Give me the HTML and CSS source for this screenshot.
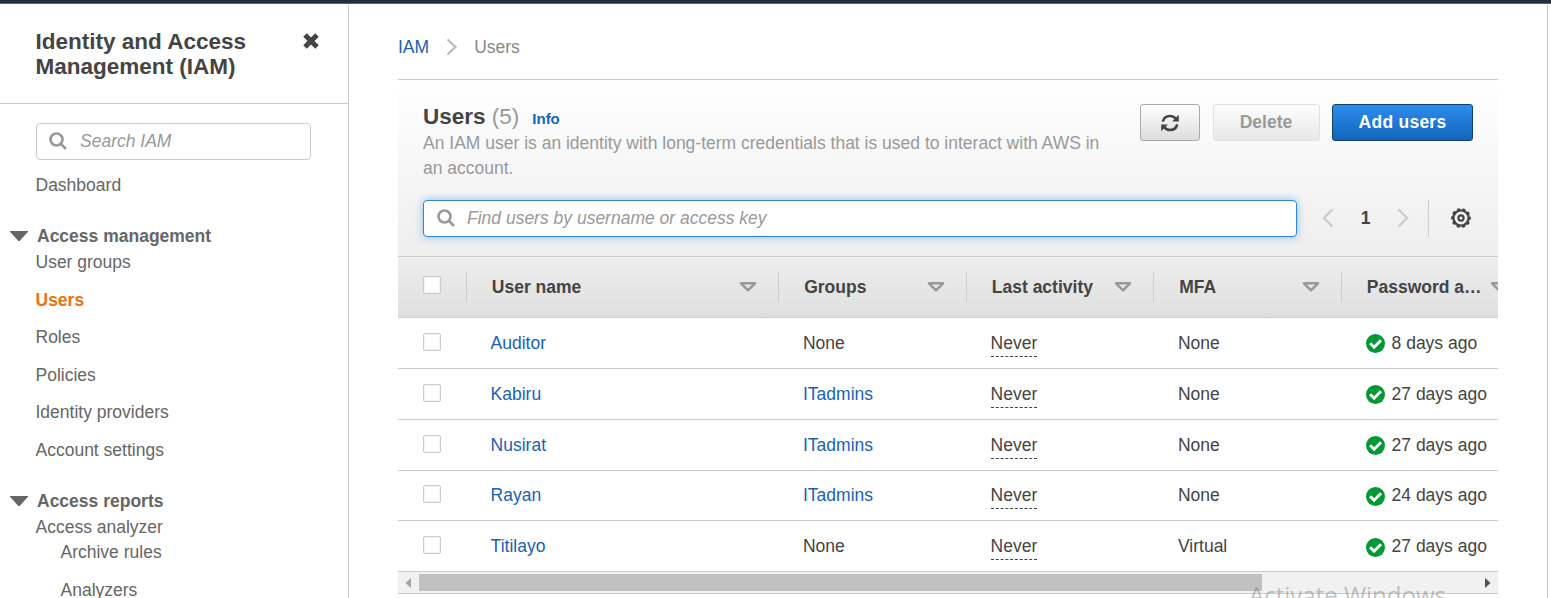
FILE: index.html
```html
<!DOCTYPE html>
<html lang="en">
<head>
<meta charset="utf-8">
<title>IAM - Users</title>
<link rel="stylesheet" href="styles.css">
</head>
<body>
<svg class="defs" width="0" height="0">
  <symbol id="search" viewBox="0 0 18 18"><circle cx="7.5" cy="7.5" r="6" fill="none" stroke="currentColor" stroke-width="2.6"/><path d="M11.7 11.7 17 17" stroke="currentColor" stroke-width="2.6"/></symbol>
  <symbol id="sort" viewBox="0 0 18 10"><path d="M2 1.3h14L9 8.4z" fill="none" stroke="currentColor" stroke-width="2.5" stroke-linejoin="round"/></symbol>
  <symbol id="caret" viewBox="0 0 18 10"><path d="M0 0h18v.8L9.6 10H8.4L0 .8z" fill="currentColor"/></symbol>
  <symbol id="ok" viewBox="0 0 19 19"><circle cx="9.5" cy="9.5" r="9.5" fill="#009933"/><path d="m4.1 9.2 4 4 6.9-6.9" fill="none" stroke="#fff" stroke-width="3"/></symbol>
</svg>
<div class="topbar"></div>
<div class="app">
  <aside class="sidebar">
    <div class="side-head">
      <h2>Identity and Access Management (IAM)</h2>
      <svg class="close" viewBox="0 0 16 16"><path d="m2 2 12 12M14 2 2 14" stroke="#444" stroke-width="5"/></svg>
    </div>
    <div class="side-search"><svg class="glass"><use href="#search"/></svg><span>Search IAM</span></div>
    <nav class="nav">
      <a>Dashboard</a>
      <h3><svg class="caret"><use href="#caret"/></svg>Access management</h3>
      <a>User groups</a>
      <a class="active">Users</a>
      <a>Roles</a>
      <a>Policies</a>
      <a>Identity providers</a>
      <a>Account settings</a>
      <h3><svg class="caret"><use href="#caret"/></svg>Access reports</h3>
      <a class="parent">Access analyzer</a>
      <a class="sub">Archive rules</a>
      <a class="sub">Analyzers</a>
    </nav>
  </aside>
  <main class="main">
    <div class="crumbs"><a>IAM</a><svg class="crumb-sep" viewBox="0 0 12 18"><path d="m1.5 1.5 8 7.5-8 7.5" fill="none" stroke="#bbb" stroke-width="2.2"/></svg><span>Users</span></div>
    <section class="panel">
      <header class="panel-head">
        <div class="title-row">
          <div class="intro">
            <h1>Users <span class="count">(5)</span><a class="info">Info</a></h1>
            <p>An IAM user is an identity with long-term credentials that is used to interact with AWS in an account.</p>
          </div>
          <div class="actions">
            <button class="btn refresh"><svg viewBox="0 0 18 18"><path d="M1.8 7.6C2.6 4 5.6 2 9 2c2.3 0 4.2.9 5.6 2.6M16.2 10.4C15.4 14 12.4 16 9 16c-2.3 0-4.2-.9-5.6-2.6" fill="none" stroke="#444" stroke-width="2.6"/><path d="M17.8.8v6.7h-6.7zM.2 17.2v-6.7h6.7z" fill="#444"/></svg></button>
            <button class="btn delete">Delete</button>
            <button class="btn primary">Add users</button>
          </div>
        </div>
        <div class="filter-row">
          <div class="filter"><svg class="glass"><use href="#search"/></svg><span>Find users by username or access key</span></div>
          <div class="pager">
            <svg viewBox="0 0 12 20"><path d="m10.5 1.5-8.5 8.5 8.5 8.5" fill="none" stroke="#ccc" stroke-width="2.4"/></svg>
            <b>1</b>
            <svg viewBox="0 0 12 20"><path d="m1.5 1.5 8.5 8.5-8.5 8.5" fill="none" stroke="#ccc" stroke-width="2.4"/></svg>
          </div>
          <div class="settings"><svg viewBox="0 0 20 20"><circle cx="10" cy="10" r="7.6" fill="none" stroke="#444" stroke-width="2.3"/><circle cx="10" cy="10" r="8.8" fill="none" stroke="#444" stroke-width="2.2" stroke-dasharray="3 2.529" stroke-dashoffset="1.5"/><circle cx="10" cy="10" r="2.6" fill="none" stroke="#444" stroke-width="2.1"/></svg></div>
        </div>
      </header>
      <div class="row thead">
        <div class="pick"><i class="box"></i></div>
        <div class="th">User name<svg class="sort"><use href="#sort"/></svg></div>
        <div class="th">Groups<svg class="sort"><use href="#sort"/></svg></div>
        <div class="th">Last activity<svg class="sort"><use href="#sort"/></svg></div>
        <div class="th">MFA<svg class="sort"><use href="#sort"/></svg></div>
        <div class="th last">Password a…<svg class="sort"><use href="#sort"/></svg></div>
      </div>
      <div class="row"><div class="pick"><i class="box"></i></div><div><a>Auditor</a></div><div>None</div><div><span class="never">Never</span></div><div>None</div><div><svg class="ok"><use href="#ok"/></svg>8 days ago</div></div>
      <div class="row"><div class="pick"><i class="box"></i></div><div><a>Kabiru</a></div><div><a>ITadmins</a></div><div><span class="never">Never</span></div><div>None</div><div><svg class="ok"><use href="#ok"/></svg>27 days ago</div></div>
      <div class="row"><div class="pick"><i class="box"></i></div><div><a>Nusirat</a></div><div><a>ITadmins</a></div><div><span class="never">Never</span></div><div>None</div><div><svg class="ok"><use href="#ok"/></svg>27 days ago</div></div>
      <div class="row"><div class="pick"><i class="box"></i></div><div><a>Rayan</a></div><div><a>ITadmins</a></div><div><span class="never">Never</span></div><div>None</div><div><svg class="ok"><use href="#ok"/></svg>24 days ago</div></div>
      <div class="row"><div class="pick"><i class="box"></i></div><div><a>Titilayo</a></div><div>None</div><div><span class="never">Never</span></div><div>Virtual</div><div><svg class="ok"><use href="#ok"/></svg>27 days ago</div></div>
      <div class="scrollbar">
        <svg viewBox="0 0 6 10"><path d="M6 0v10L.5 5z" fill="#a3a3a3"/></svg>
        <div class="track"><div class="thumb"></div></div>
        <svg viewBox="0 0 6 10"><path d="M0 0v10l5.5-5z" fill="#505050"/></svg>
      </div>
    </section>
  </main>
</div>
<div class="watermark">Activate Windows</div>
</body>
</html>
```
FILE: styles.css
```css
* { box-sizing: border-box; }
body {
  margin: 0;
  height: 598px;
  overflow: hidden;
  background: #fff;
  font: 17.5px/25px "Liberation Sans", Arial, sans-serif;
  color: #444;
}
h1, h2, h3, p { margin: 0; }
svg { flex: none; display: block; }
.defs { position: absolute; }
.topbar { height: 4px; background: #232f3e; border-bottom: 1px solid #596270; }
.app { display: flex; height: 594px; }

.sidebar { width: 349px; flex: none; border-right: 1px solid #c8d0d2; overflow: hidden; margin-top: 1px; }
.side-head {
  display: flex;
  justify-content: space-between;
  height: 99px;
  padding: 24px 29px 0 35.5px;
  border-bottom: 1px solid #ccc;
}
.side-head h2 { width: 240px; font-size: 22.5px; line-height: 25px; }
.close { width: 16px; height: 16px; margin-top: 4px; }
.side-search {
  display: flex;
  align-items: center;
  gap: 13px;
  width: 275px;
  height: 37px;
  margin: 19px 0 0 36px;
  padding: 0 12px 0;
  border: 1px solid #ccc;
  border-radius: 4px;
  color: #999;
  font-style: italic;
}
.side-search .glass { margin-top: -1px; }
.glass { width: 18px; height: 18px; color: #999; }
.nav { padding: 13px 0 0 35.5px; color: #666; }
.nav a { display: block; margin-bottom: 12.5px; }
.nav .active { color: #ec7211; font-weight: bold; }
.nav .parent { margin-bottom: 0; }
.nav .sub { padding-left: 25px; margin-bottom: 13px; }
.nav h3 {
  display: flex;
  align-items: center;
  gap: 9px;
  margin: 26px 0 1px -25.5px;
  font-size: 17.5px;
  line-height: 25px;
}
.caret { width: 18px; height: 10px; margin-top: -1px; }

.main { width: 1199px; flex: none; padding: 30px 49px 0; margin-top: 1px; border-right: 1px solid #c8c8c8; }
.crumbs { display: flex; align-items: center; height: 24px; color: #888; }
.crumb-sep { width: 12px; height: 18px; margin: 0 16.5px; }
a { color: #1a5fb8; }
.nav a { color: inherit; }
.nav a.active { color: #ec7211; }
.panel { margin-top: 20px; width: 1100px; border-top: 1px solid #ccc; overflow: hidden; }
.panel-head { height: 176px; padding: 24px 25px 0; background: linear-gradient(#fff, #eee); }
.title-row { display: flex; justify-content: space-between; height: 96px; }
.intro { width: 690px; }
h1 { font-size: 22.5px; line-height: 26px; margin-bottom: -1px; }
.count { color: #999; font-weight: normal; }
.info { margin-left: 13px; font-size: 15px; color: #1166bb; }
.intro p { color: #999; }
.actions { display: flex; }
.btn {
  height: 37px;
  padding: 0 0 1px;
  border: 1px solid #aaa;
  border-radius: 3px;
  background: linear-gradient(#fff, #ddd);
  font: bold 17.5px "Liberation Sans", Arial, sans-serif;
}
.refresh { width: 60px; display: grid; place-items: center; }
.refresh svg { width: 18px; height: 18px; margin-top: 1px; }
.delete { width: 107px; margin: 0 12px 0 13px; padding-right: 1px; color: #999; border-color: #e2e2e2; background: linear-gradient(#fdfdfd, #e8e8e8); }
.primary { width: 141px; color: #fff; border-color: #12406f; letter-spacing: .25px; background: linear-gradient(#2e8cec, #1166bb); }
.filter-row { display: flex; align-items: center; height: 37px; }
.filter {
  display: flex;
  align-items: center;
  gap: 12px;
  width: 874px;
  height: 37px;
  padding: 0 13px 1px;
  border: 1px solid #2e86dc;
  border-radius: 4px;
  background: #fff;
  box-shadow: 0 0 8px #8fbdeb;
  color: #999;
  font-style: italic;
}
.pager { display: flex; align-items: center; justify-content: space-between; width: 87px; margin-left: 25px; }
.pager svg { width: 12px; height: 20px; margin-top: -1px; }
.settings { height: 37px; margin-left: 19px; padding: 8px 0 0 22px; border-left: 1px solid #ccc; }
.settings svg { width: 20px; height: 20px; }

.row {
  display: grid;
  grid-template-columns: 68px 312.4px 187.6px 187.4px 187.6px 188px;
  align-items: center;
  height: 50.85px;
  border-bottom: 1px solid #ccc;
}
.row > div { padding-left: 24.6px; padding-top: 1px; white-space: nowrap; }
.row > .pick { padding: 0 0 2px 25px; }
.row > div:last-child { display: flex; align-items: center; gap: 7px; }
.box { display: block; width: 18px; height: 18px; border: 1px solid #ccc; border-radius: 2px; background: #fff; box-shadow: inset 0 0 0 1px #f3f3f3; }
.never { display: inline-block; height: 26px; border-bottom: 1px dashed #444; vertical-align: top; margin-top: 1px; }
.ok { width: 19px; height: 19px; margin-top: 1px; }
.row.thead { height: 62px; border-top: 1px solid #ccc; background: linear-gradient(#eee, #dfdfdf); font-weight: bold; }
.row.thead > .pick { padding-bottom: 4px; }
.row.thead > .th { display: flex; align-items: center; justify-content: space-between; height: 30px; border-left: 1px solid #ccc; padding: 0 21px 0 24.8px; }
.row.thead > .last { justify-content: flex-start; gap: 8px; padding-right: 0; }
.sort { width: 18px; height: 10px; color: #999; }

.scrollbar { display: flex; align-items: center; height: 22px; padding: 0 7px; background: #f1f1f1; border-bottom: 1px solid #ccc; }
.scrollbar svg { width: 6px; height: 10px; }
.track { flex: 1; padding: 0 8px; }
.thumb { width: 843px; height: 17px; background: #c1c1c1; }
.watermark {
  position: absolute;
  left: 1249px;
  top: 579px;
  font: 24px/32px "Open Sans", sans-serif;
  color: rgba(120, 120, 120, .45);
  white-space: nowrap;
}
```
